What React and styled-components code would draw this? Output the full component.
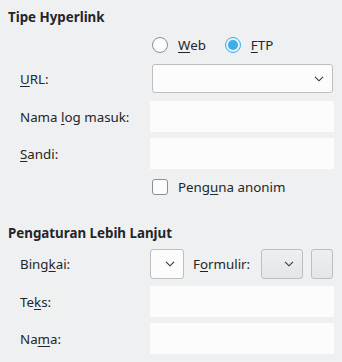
import React from "react"
import styled, { createGlobalStyle } from "styled-components"

const GlobalStyle = createGlobalStyle`
  html, body {
    margin: 0;
    padding: 0;
    background: #eff0f1;
  }
  body {
    font-family: "Noto Sans", "DejaVu Sans", sans-serif;
    font-size: 13.33px;
    color: #232627;
  }
`;

const Page = styled.div`
  width: 342px;
  height: 362px;
  box-sizing: border-box;
  padding: 8px 8px 0 8px;
  display: flex;
  flex-direction: column;
`;

const SectionTitle = styled.div`
  font-weight: 700;
  line-height: 18px;
  height: 18px;
  margin-top: ${p => p.top || 0}px;
`;

const Row = styled.div`
  display: grid;
  grid-template-columns: 130px 184px;
  align-items: center;
  margin-left: 12px;
  margin-top: ${p => p.top || 0}px;
  height: ${p => p.h || 31}px;
`;

const Label = styled.div`
  line-height: 18px;
  white-space: nowrap;
`;

const Key = styled.span`
  text-decoration: underline;
  text-underline-offset: 2px;
  text-decoration-thickness: 1px;
`;

const TextField = styled.div`
  height: 31px;
  background: #fcfcfc;
`;

const Combo = styled.div`
  box-sizing: border-box;
  height: ${p => p.h || 29}px;
  width: ${p => (p.w ? `${p.w}px` : "auto")};
  margin-left: ${p => (p.auto ? "auto" : `${p.ml || 0}px`)};
  border: 1px solid #bcbebf;
  border-radius: 3px;
  background: ${p => (p.button ? "linear-gradient(#eeeff0, #e4e5e6)" : "#fcfcfc")};
  display: flex;
  align-items: center;
  justify-content: flex-end;
  padding-right: 8px;
  flex-shrink: 0;
`;

const Inline = styled.div`
  display: flex;
  align-items: center;
  height: 100%;
  padding-left: ${p => p.pl || 0}px;
`;

const RadioGroup = styled.label`
  display: flex;
  align-items: center;
  gap: 10px;
  margin-right: ${p => p.mr || 0}px;
  line-height: 18px;
`;

const RadioCircle = styled.span`
  box-sizing: border-box;
  width: 16px;
  height: 16px;
  border-radius: 50%;
  border: 1px solid ${p => (p.checked ? "#3daee9" : "#8d8f91")};
  background: ${p => (p.checked ? "#e3f2fb" : "#fcfcfc")};
  display: flex;
  align-items: center;
  justify-content: center;
  &::after {
    content: "";
    display: ${p => (p.checked ? "block" : "none")};
    width: 10px;
    height: 10px;
    border-radius: 50%;
    background: #3daee9;
  }
`;

const CheckBox = styled.span`
  box-sizing: border-box;
  width: 16px;
  height: 16px;
  border-radius: 3px;
  border: 1px solid #8d8f91;
  background: #fcfcfc;
`;

const SideLabel = styled.span`
  margin-left: 9px;
  line-height: 18px;
`;

const Chevron = () => (
  <svg width="10" height="6" viewBox="0 0 10 6">
    <path d="M1 0.8 L5 4.8 L9 0.8" fill="none" stroke="#31363b" strokeWidth="1.1" />
  </svg>
);

export default function App() {
  return (
    <>
      <GlobalStyle />
      <Page>
        <SectionTitle>Tipe Hyperlink</SectionTitle>

        <Row top={9} h={20}>
          <span />
          <Inline pl={2}>
            <RadioGroup mr={19}>
              <RadioCircle />
              <span><Key>W</Key>eb</span>
            </RadioGroup>
            <RadioGroup>
              <RadioCircle checked />
              <span><Key>F</Key>TP</span>
            </RadioGroup>
          </Inline>
        </Row>

        <Row top={9} h={29}>
          <Label><Key>U</Key>RL:</Label>
          <Combo style={{ marginLeft: 2, marginRight: 1 }}>
            <Chevron />
          </Combo>
        </Row>

        <Row top={8}>
          <Label>Nama <Key>l</Key>og masuk:</Label>
          <TextField />
        </Row>

        <Row top={6}>
          <Label><Key>S</Key>andi:</Label>
          <TextField />
        </Row>

        <Row top={8} h={20}>
          <span />
          <Inline pl={2}>
            <RadioGroup>
              <CheckBox />
              <span>Peng<Key>u</Key>na anonim</span>
            </RadioGroup>
          </Inline>
        </Row>

        <SectionTitle top={27}>Pengaturan Lebih Lanjut</SectionTitle>

        <Row top={7} h={30}>
          <Label>Bing<Key>k</Key>ai:</Label>
          <Inline>
            <Combo h={30} w={34}>
              <Chevron />
            </Combo>
            <SideLabel>F<Key>o</Key>rmulir:</SideLabel>
            <Combo h={30} w={42} auto button>
              <Chevron />
            </Combo>
            <Combo h={30} w={22} ml={8} button style={{ marginRight: 1 }} />
          </Inline>
        </Row>

        <Row top={7}>
          <Label>Te<Key>k</Key>s:</Label>
          <TextField />
        </Row>

        <Row top={6}>
          <Label>Na<Key>m</Key>a:</Label>
          <TextField />
        </Row>
      </Page>
    </>
  );
}
